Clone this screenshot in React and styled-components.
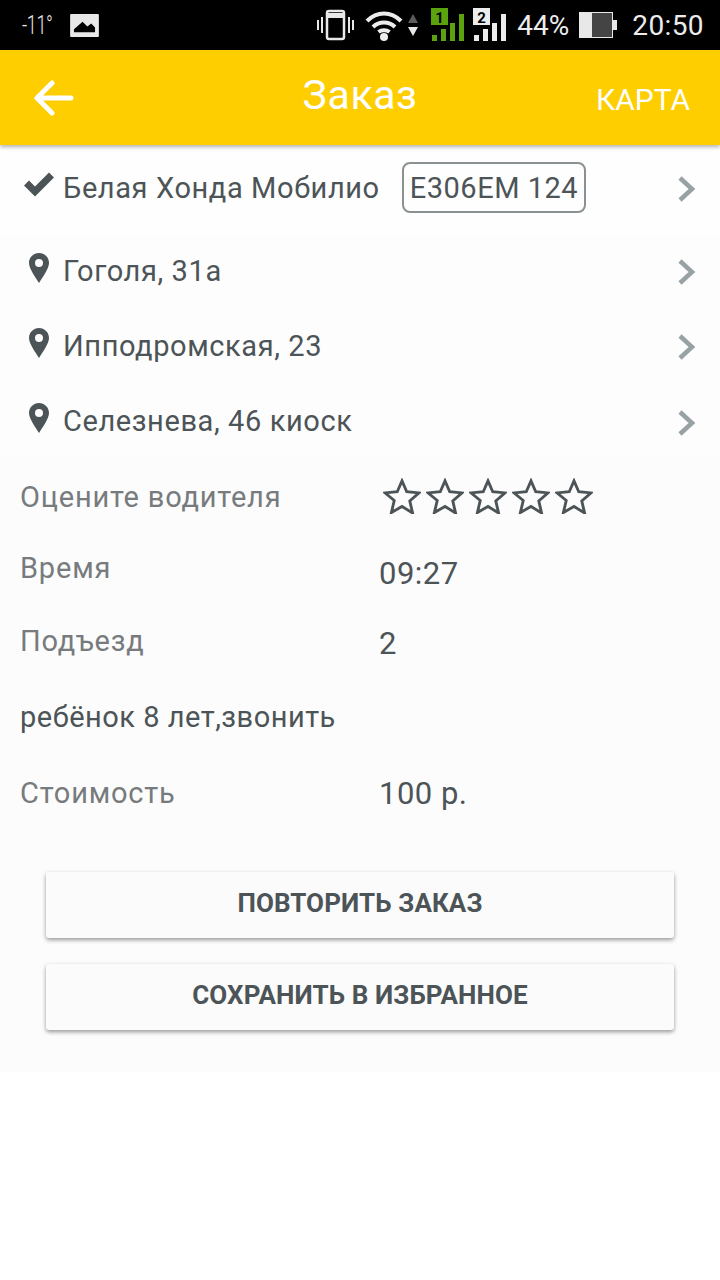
import React from 'react';
import styled, { createGlobalStyle } from 'styled-components';

const GlobalStyle = createGlobalStyle`
  html, body {
    margin: 0;
    padding: 0;
    background: #fff;
    font-family: Roboto, "Liberation Sans", sans-serif;
  }
`;

const Screen = styled.div`
  width: 720px;
  height: 1280px;
  overflow: hidden;
  background: #fff;
`;

// Status bar
const StatusBar = styled.div`
  height: 50px;
  background: #000;
  display: flex;
  align-items: center;
  padding: 0 16px 0 22px;
  box-sizing: border-box;
  color: #e8e8e8;
`;

const Temp = styled.span`
  width: 48px;
  font-size: 25px;
  font-weight: 300;
  letter-spacing: -0.5px;
  transform: scaleX(0.72);
  transform-origin: left center;
  white-space: nowrap;
`;

const StatusRight = styled.div`
  margin-left: auto;
  display: flex;
  align-items: center;
`;

const StatusSlot = styled.div`
  display: flex;
  margin-left: ${p => p.$left || 0}px;
`;

const StatusText = styled.span`
  font-size: 28px;
  letter-spacing: ${p => p.$spacing || 0}px;
  margin-left: ${p => p.$left || 0}px;
  color: #ececec;
`;

// App bar
const AppBar = styled.header`
  position: relative;
  z-index: 1;
  height: 95px;
  box-sizing: border-box;
  background: #fece00;
  box-shadow: 0 2px 4px rgba(0, 0, 0, 0.3);
  display: grid;
  grid-template-columns: 1fr auto 1fr;
  align-items: center;
  padding: 0 30px 0 34px;
`;

const BackButton = styled.div`
  display: flex;
  align-items: center;
`;

const Title = styled.h1`
  margin: 0 4px 5px 0;
  font-size: 41px;
  font-weight: 400;
  letter-spacing: 0.6px;
  color: #fff;
`;

const MapLink = styled.div`
  justify-self: end;
  font-size: 30px;
  color: #fff;
  margin-top: 4px;
`;

// Content
const Content = styled.main`
  height: 927px;
  background: #fcfcfc;
  box-sizing: border-box;
`;

const RouteRow = styled.div`
  height: ${p => p.$height}px;
  display: flex;
  align-items: center;
  padding: 0 24px ${p => p.$bottom || 0}px 22px;
  box-sizing: border-box;
  background: ${p => (p.$first ? '#fefefe' : '#fdfdfd')};
`;

const IconSlot = styled.div`
  width: 41px;
  flex: none;
  display: flex;
  justify-content: center;
  padding-right: 8px;
  box-sizing: border-box;
  margin-top: -6px;
`;

const RouteText = styled.span`
  font-size: 29px;
  letter-spacing: 0.6px;
  color: #4c5457;
`;

const Plate = styled.span`
  margin-left: 22px;
  height: 51px;
  padding: 0 6px;
  border: 2px solid #8b9192;
  border-radius: 8px;
  display: inline-flex;
  align-items: center;
  box-sizing: border-box;
  font-size: 29px;
  letter-spacing: 0.5px;
  color: #4c5457;
`;

const Chevron = styled.div`
  margin-left: auto;
  margin-top: 3px;
  display: flex;
`;

const InfoRow = styled.div`
  height: ${p => p.$height}px;
  display: grid;
  grid-template-columns: 359px 1fr;
  align-items: center;
  padding-left: 20px;
`;

const Label = styled.span`
  font-size: 29px;
  letter-spacing: ${p => (p.$dark ? 0.5 : 0.8)}px;
  color: ${p => (p.$dark ? '#4c5457' : '#777b7d')};
  margin-top: ${p => p.$shift || 0}px;
  white-space: nowrap;
`;

const Value = styled.span`
  font-size: 31px;
  letter-spacing: 0.5px;
  color: #4c5457;
  margin-top: ${p => p.$shift || 0}px;
`;

const Stars = styled.div`
  display: flex;
  gap: 5px;
  margin: -3px 0 0 4px;
`;

const Buttons = styled.div`
  display: flex;
  flex-direction: column;
  gap: 26px;
  padding: 43px 46px 0;
`;

const ActionButton = styled.button`
  height: 66px;
  padding: 0 0 4px;
  border: 0;
  border-radius: 3px;
  background: #fbfbfb;
  box-shadow: 0 2px 4px rgba(0, 0, 0, 0.4);
  font-family: inherit;
  font-size: 26px;
  font-weight: 700;
  letter-spacing: 0.1px;
  color: #4c5457;
`;

// Icons
const BackArrow = () => (
  <svg width="40" height="36" viewBox="0 0 40 36" fill="none" stroke="#fff" strokeWidth="5" strokeLinecap="round" strokeLinejoin="round">
    <path d="M37 18H4M18 3L3 18l15 15" />
  </svg>
);

const CheckIcon = () => (
  <svg width="32" height="27" viewBox="0 0 32 26">
    <path d="M1 14l5-5 6 6L26 1l5 5-19 19z" fill="#4c5457" />
  </svg>
);

const PinIcon = () => (
  <svg width="20" height="30" viewBox="0 0 20 30">
    <path fillRule="evenodd" d="M10 0C4.500 0 0 4.400 0 9.900c0 5.500 6.500 14.400 10 20.100 3.500-5.700 10-14.600 10-20.100C20 4.400 15.500 0 10 0zm0 6a4 4 0 1 1 0 8 4 4 0 0 1 0-8z" fill="#4c5457" />
  </svg>
);

const ChevronIcon = () => (
  <svg width="18" height="26" viewBox="0 0 18 26" fill="none" stroke="#98a1a4" strokeWidth="4.500">
    <path d="M2 2l12 11L2 24" />
  </svg>
);

const StarIcon = () => (
  <svg width="38" height="36" viewBox="0 0 40 38" fill="none" stroke="#4c5457" strokeWidth="3" strokeLinejoin="miter">
    <path d="M20 3l5 11.500 13 1.200-9.800 8.500 3 12.800L20 30l-11.200 6.500 3-12.800L2 15.700l13-1.200z" />
  </svg>
);

const PictureIcon = () => (
  <svg width="29" height="23" viewBox="0 0 30 24">
    <path fillRule="evenodd" d="M1 0h28a1 1 0 0 1 1 1v22a1 1 0 0 1-1 1H1a1 1 0 0 1-1-1V1a1 1 0 0 1 1-1zm3 19h22v-5l-4-4-4 3-5-5-9 8z" fill="#e8e8e8" />
  </svg>
);

const VibrateIcon = () => (
  <svg width="37" height="32" viewBox="0 0 37 32" fill="none" stroke="#e8e8e8" strokeWidth="2">
    <path d="M1 11v10M5 8v16M32 8v16M36 11v10" />
    <rect x="10" y="2" width="17" height="28" rx="2" strokeWidth="2.500" />
    <path d="M10 6.500h17" strokeWidth="5" />
  </svg>
);

const WifiIcon = () => (
  <svg width="38" height="31" viewBox="0 0 38 31" fill="none" stroke="#ececec" strokeWidth="4">
    <path d="M2 11c10-10 24-10 34 0M8 17c6-6 16-6 22 0M13.500 22c3-2.500 8-2.500 11 0" />
    <circle cx="19" cy="27" r="4" fill="#ececec" stroke="none" />
  </svg>
);

const DataArrows = () => (
  <svg width="12" height="24" viewBox="0 0 12 24">
    <path d="M6 1l5 9H1z" fill="#5c5c5c" />
    <path d="M6 23l5-9H1z" fill="#e8e8e8" />
  </svg>
);

const SignalIcon = ({ color, sim }) => (
  <svg width="34" height="34" viewBox="0 0 34 34">
    <rect x="0" y="0" width="17" height="17" fill={color} />
    <text x="8.500" y="14.500" fontSize="15" fontWeight="700" textAnchor="middle" fontFamily="Roboto" fill="#000">{sim}</text>
    <rect x="1" y="27" width="5" height="6" fill={color} />
    <rect x="10" y="21" width="5" height="12" fill={color} />
    <rect x="19" y="15" width="5" height="18" fill={color} />
    <rect x="28" y="6" width="5" height="27" fill={color} />
  </svg>
);

const BatteryIcon = () => (
  <svg width="38" height="26" viewBox="0 0 38 26">
    <rect x="0" y="0" width="34" height="26" fill="#e8e8e8" />
    <rect x="13" y="1" width="20" height="24" fill="#444" />
    <rect x="34" y="8" width="4" height="10" fill="#e8e8e8" />
  </svg>
);

const stars = [1, 2, 3, 4, 5];

const App = () => {
  return (
    <Screen>
      <GlobalStyle />
      <StatusBar>
        <Temp>-11°</Temp>
        <PictureIcon />
        <StatusRight>
          <VibrateIcon />
          <StatusSlot $left={11}><WifiIcon /></StatusSlot>
          <StatusSlot $left={4}><DataArrows /></StatusSlot>
          <StatusSlot $left={12}><SignalIcon color="#5aa30f" sim="1" /></StatusSlot>
          <StatusSlot $left={8}><SignalIcon color="#ececec" sim="2" /></StatusSlot>
          <StatusText $left={10}>44%</StatusText>
          <StatusSlot $left={10}><BatteryIcon /></StatusSlot>
          <StatusText $left={15} $spacing={0.4}>20:50</StatusText>
        </StatusRight>
      </StatusBar>

      <AppBar>
        <BackButton><BackArrow /></BackButton>
        <Title>Заказ</Title>
        <MapLink>КАРТА</MapLink>
      </AppBar>

      <Content>
        <RouteRow $height={90} $bottom={5} $first>
          <IconSlot><CheckIcon /></IconSlot>
          <RouteText>Белая Хонда Мобилио</RouteText>
          <Plate>Е306ЕМ 124</Plate>
          <Chevron><ChevronIcon /></Chevron>
        </RouteRow>
        <RouteRow $height={71}>
          <IconSlot><PinIcon /></IconSlot>
          <RouteText>Гоголя, 31а</RouteText>
          <Chevron><ChevronIcon /></Chevron>
        </RouteRow>
        <RouteRow $height={79}>
          <IconSlot><PinIcon /></IconSlot>
          <RouteText>Ипподромская, 23</RouteText>
          <Chevron><ChevronIcon /></Chevron>
        </RouteRow>
        <RouteRow $height={72}>
          <IconSlot><PinIcon /></IconSlot>
          <RouteText>Селезнева, 46 киоск</RouteText>
          <Chevron><ChevronIcon /></Chevron>
        </RouteRow>

        <InfoRow $height={80}>
          <Label>Оцените водителя</Label>
          <Stars>
            {stars.map(n => <StarIcon key={n} />)}
          </Stars>
        </InfoRow>
        <InfoRow $height={72}>
          <Label $shift={-10}>Время</Label>
          <Value>09:27</Value>
        </InfoRow>
        <InfoRow $height={68}>
          <Label $shift={-4}>Подъезд</Label>
          <Value>2</Value>
        </InfoRow>
        <InfoRow $height={80}>
          <Label $dark>ребёнок 8 лет,звонить</Label>
        </InfoRow>
        <InfoRow $height={72}>
          <Label>Стоимость</Label>
          <Value>100 р.</Value>
        </InfoRow>

        <Buttons>
          <ActionButton>ПОВТОРИТЬ ЗАКАЗ</ActionButton>
          <ActionButton>СОХРАНИТЬ В ИЗБРАННОЕ</ActionButton>
        </Buttons>
      </Content>
    </Screen>
  );
};

export default App;
